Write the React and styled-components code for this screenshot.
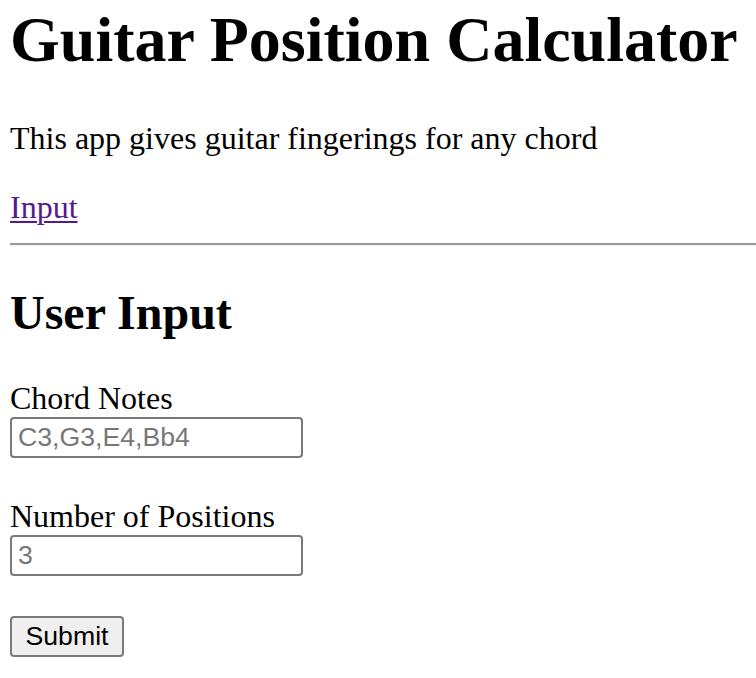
import React from "react";
import styled, { createGlobalStyle } from "styled-components";

const GlobalStyle = createGlobalStyle`
  html, body { margin: 0; padding: 0; background: #ffffff; }
  body {
    padding: 3px 0 0 10px;
    font-family: "Liberation Serif", "Times New Roman", serif;
    color: #000000;
  }
`;

const Page = styled.main`
  display: flex;
  flex-direction: column;
`;

const Title = styled.h1`
  margin: 0;
  font-size: 64px;
  line-height: 74px;
  font-weight: 700;
`;

const Text = styled.p`
  margin: ${(p) => p.$top}px 0 0;
  font-size: 32px;
  line-height: 37px;
`;

const NavLink = styled.a`
  color: #551a8b;
  text-decoration: underline;
  text-underline-offset: 3px;
  text-decoration-thickness: 2px;
`;

const Divider = styled.hr`
  margin: 17px 0 0;
  border: 0;
  border-top: 2px solid #9a9a9a;
  border-bottom: 1px solid #eeeeee;
  height: 0;
`;

const Heading = styled.h2`
  margin: 39px 0 0;
  font-size: 48px;
  line-height: 55px;
  font-weight: 700;
`;

const Form = styled.form`
  display: flex;
  flex-direction: column;
  align-items: flex-start;
  gap: 40px;
  margin-top: 40px;
`;

const Field = styled.div`
  display: flex;
  flex-direction: column;
  align-items: flex-start;
`;

const Label = styled.label`
  font-size: 32px;
  line-height: 37px;
`;

const Input = styled.input`
  box-sizing: border-box;
  width: 293px;
  height: 41px;
  margin: 0;
  padding: 0 6px;
  border: 2px solid #7a7a7a;
  border-radius: 4px;
  font-family: "Liberation Sans", Arial, sans-serif;
  font-size: 26.67px;
  color: #000;
  background: #fff;
  &::placeholder { color: #777777; }
`;

const Button = styled.button`
  box-sizing: border-box;
  width: 114px;
  height: 41px;
  margin: 0;
  padding: 0;
  border: 2px solid #7a7a7a;
  border-radius: 4px;
  background: #efefef;
  font-family: "Liberation Sans", Arial, sans-serif;
  font-size: 26.67px;
  color: #000;
`;

export default function App() {
  return (
    <Page>
      <GlobalStyle />
      <Title>Guitar Position Calculator</Title>
      <Text $top={43}>This app gives guitar fingerings for any chord</Text>
      <Text $top={32}>
        <NavLink href="#input">Input</NavLink>
      </Text>
      <Divider />
      <Heading id="input">User Input</Heading>
      <Form onSubmit={(e) => e.preventDefault()}>
        <Field>
          <Label htmlFor="notes">Chord Notes</Label>
          <Input id="notes" placeholder="C3,G3,E4,Bb4" />
        </Field>
        <Field>
          <Label htmlFor="positions">Number of Positions</Label>
          <Input id="positions" placeholder="3" />
        </Field>
        <Button type="submit">Submit</Button>
      </Form>
    </Page>
  );
}
